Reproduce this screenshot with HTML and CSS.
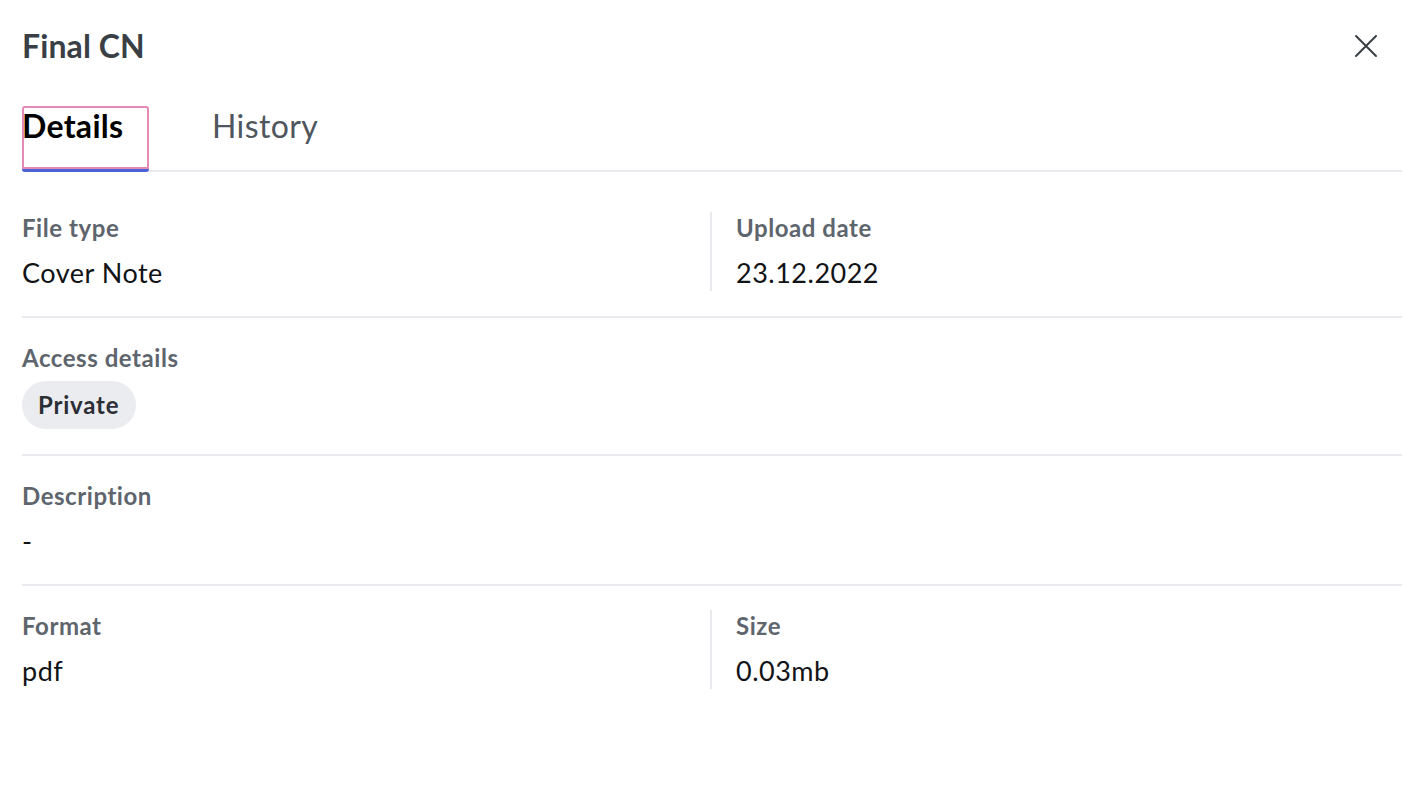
FILE: index.html
```html
<!DOCTYPE html>
<html lang="en">
<head>
<meta charset="utf-8">
<title>Final CN</title>
<link rel="stylesheet" href="styles.css">
</head>
<body>
<div class="panel">
  <header class="header">
    <h1 class="title">Final CN</h1>
    <button class="close" aria-label="Close">
      <svg width="24" height="24" viewBox="0 0 24 24" fill="none" stroke="#3a3f45" stroke-width="2" stroke-linecap="round">
        <path d="M2 2 L22 22 M22 2 L2 22"/>
      </svg>
    </button>
  </header>
  <nav class="tabs">
    <div class="tab tab-active">Details</div>
    <div class="tab">History</div>
  </nav>
  <section class="details">
    <div class="row row-split">
      <div class="cell cell-left">
        <div class="label">File type</div>
        <div class="value">Cover Note</div>
      </div>
      <div class="cell cell-right">
        <div class="label">Upload date</div>
        <div class="value">23.12.2022</div>
      </div>
    </div>
    <div class="row">
      <div class="cell">
        <div class="label">Access details</div>
        <span class="pill">Private</span>
      </div>
    </div>
    <div class="row">
      <div class="cell">
        <div class="label">Description</div>
        <div class="value">-</div>
      </div>
    </div>
    <div class="row row-split row-last">
      <div class="cell cell-left">
        <div class="label">Format</div>
        <div class="value">pdf</div>
      </div>
      <div class="cell cell-right">
        <div class="label">Size</div>
        <div class="value">0.03mb</div>
      </div>
    </div>
  </section>
</div>
</body>
</html>
```

FILE: styles.css
```css
* { box-sizing: border-box; }

html, body {
  margin: 0;
  padding: 0;
  background: #ffffff;
}

body {
  font-family: Lato, "Open Sans", "Liberation Sans", sans-serif;
  color: #111316;
}

.panel {
  padding: 28px 10px 0 22px;
}

.header {
  display: flex;
  align-items: center;
  justify-content: space-between;
}

.title {
  margin: 0;
  font-size: 32px;
  line-height: 36px;
  font-weight: 700;
  letter-spacing: 0.1px;
  color: #3a3f46;
}

.close {
  border: 0;
  background: none;
  padding: 0;
  margin-right: 24px;
  width: 24px;
  height: 24px;
  display: flex;
  cursor: pointer;
}

.tabs {
  margin-top: 42px;
  display: flex;
  gap: 63px;
  border-bottom: 2px solid #ebebef;
}

.tab {
  height: 66px;
  margin-bottom: -2px;
  font-size: 32px;
  line-height: 40px;
  letter-spacing: 0.4px;
  color: #50565d;
  font-weight: 400;
}

.tab-active {
  width: 127px;
  font-weight: 700;
  letter-spacing: 0.3px;
  color: #000000;
  border-bottom: 3px solid #4a62d6;
  border-radius: 3px;
  box-shadow: inset 0 0 0 2px #e58ab6;
}

.details {
  padding-top: 16px;
}

.row {
  padding: 24px 0 25px;
  border-bottom: 2px solid #ebebef;
}

.row-last {
  border-bottom: 0;
}

.row-split {
  display: grid;
  grid-template-columns: 1fr 1fr;
}

.cell-left {
  border-right: 2px solid #e8e9ed;
}

.cell-right {
  padding-left: 24px;
}

.label {
  font-size: 24px;
  line-height: 32px;
  font-weight: 700;
  letter-spacing: 0.55px;
  color: #5e656d;
}

.value {
  margin-top: 11px;
  font-size: 27px;
  line-height: 36px;
  letter-spacing: 0.5px;
  color: #111316;
}

.pill {
  display: inline-block;
  margin-top: 7px;
  height: 48px;
  padding: 0 17px 0 16px;
  border-radius: 24px;
  background: #ebecf0;
  font-size: 24px;
  line-height: 48px;
  font-weight: 700;
  letter-spacing: 0.8px;
  color: #2b2f35;
}
```
